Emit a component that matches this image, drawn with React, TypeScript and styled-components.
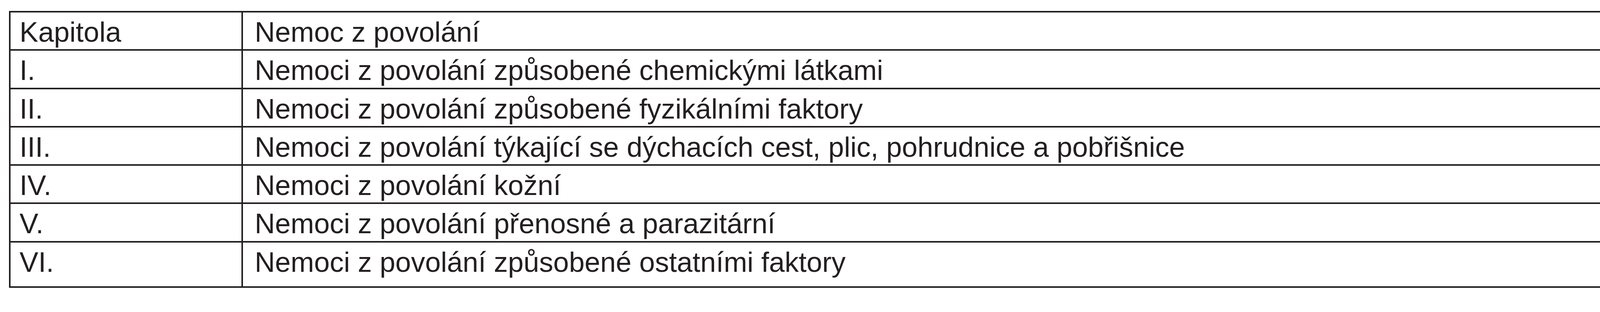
import styled, { createGlobalStyle } from 'styled-components';

const GlobalStyle = createGlobalStyle`
  html, body {
    margin: 0;
    padding: 0;
    background: #fff;
  }
`;

const rows = [
  ['Kapitola', 'Nemoc z povolání'],
  ['I.', 'Nemoci z povolání způsobené chemickými látkami'],
  ['II.', 'Nemoci z povolání způsobené fyzikálními faktory'],
  ['III.', 'Nemoci z povolání týkající se dýchacích cest, plic, pohrudnice a pobřišnice'],
  ['IV.', 'Nemoci z povolání kožní'],
  ['V.', 'Nemoci z povolání přenosné a parazitární'],
  ['VI.', 'Nemoci z povolání způsobené ostatními faktory'],
];

const App = () => {
  return (
    <>
      <GlobalStyle />
      <Page>
        <Table role="table">
          {rows.map(([chapter, name], i) => {
            const last = i === rows.length - 1;
            return (
              <Row role="row" key={chapter}>
                <Cell role="cell" $last={last}>
                  {chapter}
                </Cell>
                <Cell role="cell" $wide $last={last}>
                  {name}
                </Cell>
              </Row>
            );
          })}
        </Table>
      </Page>
    </>
  );
};

export default App;

const Page = styled.div`
  padding: 28px 0 0 23px;
  width: 4285px;
  height: 800px;
  box-sizing: border-box;
`;

const Table = styled.div`
  width: 4229px;
  box-sizing: border-box;
  border-top: 4px solid #231f20;
  border-left: 4px solid #231f20;
  font-family: 'Liberation Sans', Arial, sans-serif;
  font-size: 72px;
  color: #231f20;
`;

const Row = styled.div`
  display: grid;
  grid-template-columns: 595px 3630px;
`;

const Cell = styled.div<{ $wide?: boolean; $last?: boolean }>`
  box-sizing: border-box;
  height: ${(p) => (p.$last ? '116px' : '98.3px')};
  padding: 11px 0 0 ${(p) => (p.$wide ? '30px' : '23px')};
  line-height: 78px;
  white-space: nowrap;
  border-right: 4px solid #231f20;
  border-bottom: 4px solid #231f20;
`;
